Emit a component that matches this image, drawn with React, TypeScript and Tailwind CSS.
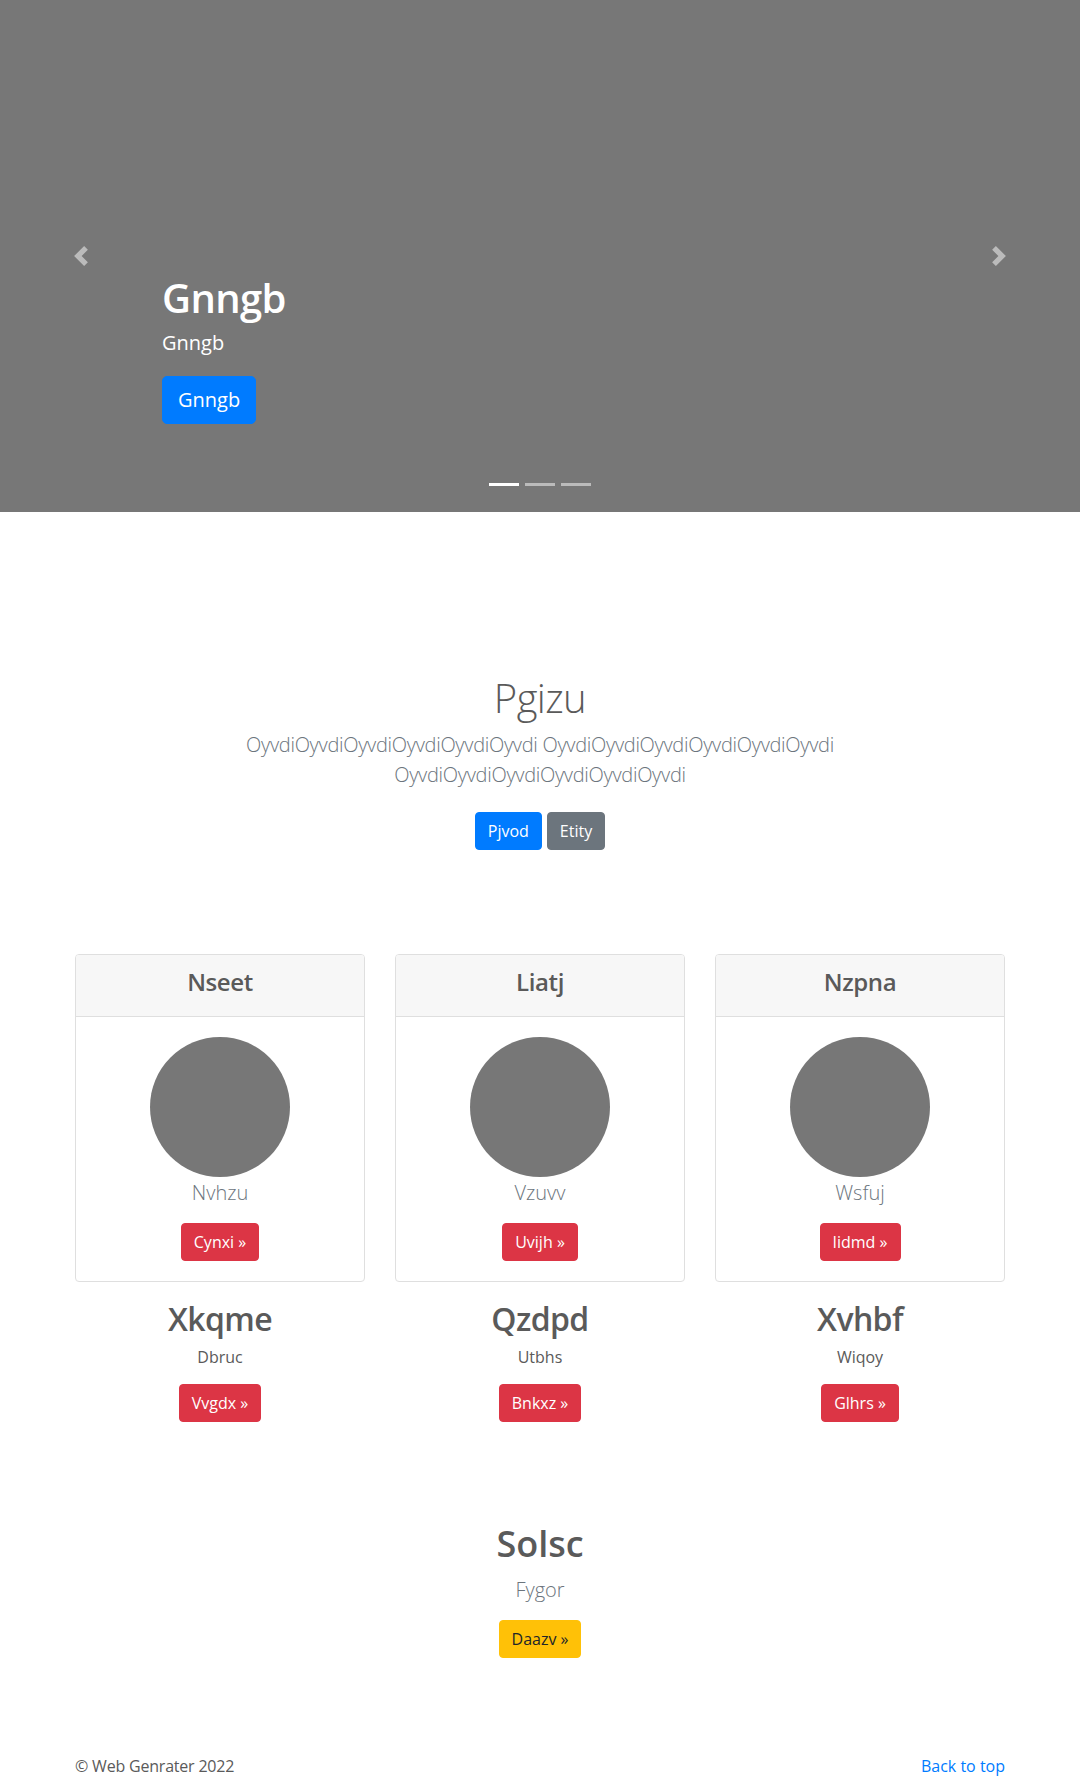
import React from "react";

const font = "font-['Open_Sans','Noto_Sans',sans-serif]";

function PrevIcon() {
  return (
    <svg width="20" height="20" viewBox="0 0 8 8" fill="#fff" className="opacity-50">
      <path d="M5.25 0l-4 4 4 4 1.5-1.5L4.25 4l2.5-2.5L5.25 0z" />
    </svg>
  );
}

function NextIcon() {
  return (
    <svg width="20" height="20" viewBox="0 0 8 8" fill="#fff" className="opacity-50">
      <path d="M2.75 0l-1.5 1.5L3.75 4l-2.5 2.5L2.75 8l4-4-4-4z" />
    </svg>
  );
}

const cols = [
  { head: "Nseet", sub: "Nvhzu", btn: "Cynxi", title: "Xkqme", text: "Dbruc", btn2: "Vvgdx" },
  { head: "Liatj", sub: "Vzuvv", btn: "Uvijh", title: "Qzdpd", text: "Utbhs", btn2: "Bnkxz" },
  { head: "Nzpna", sub: "Wsfuj", btn: "Iidmd", title: "Xvhbf", text: "Wiqoy", btn2: "Glhrs" },
];

export default function App() {
  const w = "OyvdiOyvdiOyvdiOyvdiOyvdiOyvdi";
  return (
    <div className={`${font} w-[1080px] h-[1778px] overflow-hidden bg-white text-[#5a5a5a] text-[16px] leading-[24px]`}>
      {/* Carousel */}
      <div className="relative h-[512px] bg-[#777777]">
        <div className="absolute left-0 top-0 h-full w-[162px] flex items-center justify-center">
          <PrevIcon />
        </div>
        <div className="absolute right-0 top-0 h-full w-[162px] flex items-center justify-center">
          <NextIcon />
        </div>
        <div className="absolute left-[162px] top-[274px] text-white">
          <h1 className="text-[40px] leading-[48px] font-semibold mb-[6px] tracking-[-0.6px]">Gnngb</h1>
          <p className="text-[20px] leading-[30px]">Gnngb</p>
          <a className="inline-block mt-[18px] bg-[#007bff] border border-[#007bff] rounded-[5px] px-[15px] py-[8px] text-[20px] leading-[30px] text-white">
            Gnngb
          </a>
        </div>
        <div className="absolute top-[483px] left-0 w-full flex justify-center gap-[6px]">
          <span className="block w-[30px] h-[3px] bg-white" />
          <span className="block w-[30px] h-[3px] bg-white opacity-50" />
          <span className="block w-[30px] h-[3px] bg-white opacity-50" />
        </div>
      </div>

      {/* Jumbotron */}
      <section className="text-center pt-[162px]">
        <h1 className="text-[40px] leading-[48px] font-light mb-[8px] tracking-[-0.6px]">Pgizu</h1>
        <p className="mx-auto w-[700px] text-[20px] leading-[30px] font-light text-[#6c757d] tracking-[-0.3px]">
          {w} {w} {w}
        </p>
        <div className="mt-[22px] flex justify-center gap-[5px]">
          <a className="inline-block bg-[#007bff] border border-[#007bff] text-white rounded-[4px] px-[12px] py-[6px] text-[16px] leading-[24px]">
            Pjvod
          </a>
          <a className="inline-block bg-[#6c757d] border border-[#6c757d] text-white rounded-[4px] px-[12px] py-[6px] text-[16px] leading-[24px]">
            Etity
          </a>
        </div>
      </section>

      {/* Cards */}
      <div className="mt-[104px] w-[930px] mx-auto grid grid-cols-3 gap-[30px] text-center">
        {cols.map((c) => (
          <div key={c.head} className="flex flex-col items-center">
            <div className="w-full border border-[#dfdfdf] rounded-[4px] overflow-hidden">
              <div className="bg-[#f7f7f7] border-b border-[#dfdfdf] pt-[13px] pb-[19px]">
                <h4 className="text-[24px] leading-[28.8px] font-semibold tracking-[-0.4px]">{c.head}</h4>
              </div>
              <div className="p-[20px] flex flex-col items-center">
                <svg width="140" height="140" className="block">
                  <circle cx="70" cy="70" r="70" fill="#777777" />
                </svg>
                <p className="mt-[1px] text-[20px] leading-[30px] font-light text-[#6c757d] mb-[15px]">{c.sub}</p>
                <a className="inline-block bg-[#dc3545] border border-[#dc3545] text-white rounded-[4px] px-[12px] py-[6px] text-[16px] leading-[24px]">
                  {c.btn} »
                </a>
              </div>
            </div>
            <h2 className="mt-[18px] text-[32px] leading-[38.4px] font-semibold mb-[7px] tracking-[-0.6px]">{c.title}</h2>
            <p className="mb-[15px]">{c.text}</p>
            <a className="inline-block bg-[#dc3545] border border-[#dc3545] text-white rounded-[4px] px-[12px] py-[6px] text-[16px] leading-[24px]">
              {c.btn2} »
            </a>
          </div>
        ))}
      </div>

      {/* Solsc */}
      <section className="mt-[100px] text-center">
        <h2 className="text-[36px] leading-[43px] font-semibold mb-[10px]">Solsc</h2>
        <p className="text-[20px] leading-[30px] font-light text-[#6c757d] mb-[15px]">Fygor</p>
        <a className="inline-block bg-[#ffc107] border border-[#ffc107] text-[#212529] rounded-[4px] px-[12px] py-[6px] text-[16px] leading-[24px]">
          Daazv »
        </a>
      </section>

      {/* Footer */}
      <footer className="mt-[96px] w-[930px] mx-auto flex justify-between">
        <p className="tracking-[-0.2px]">© Web Genrater 2022</p>
        <a className="text-[#007bff]">Back to top</a>
      </footer>
    </div>
  );
}
